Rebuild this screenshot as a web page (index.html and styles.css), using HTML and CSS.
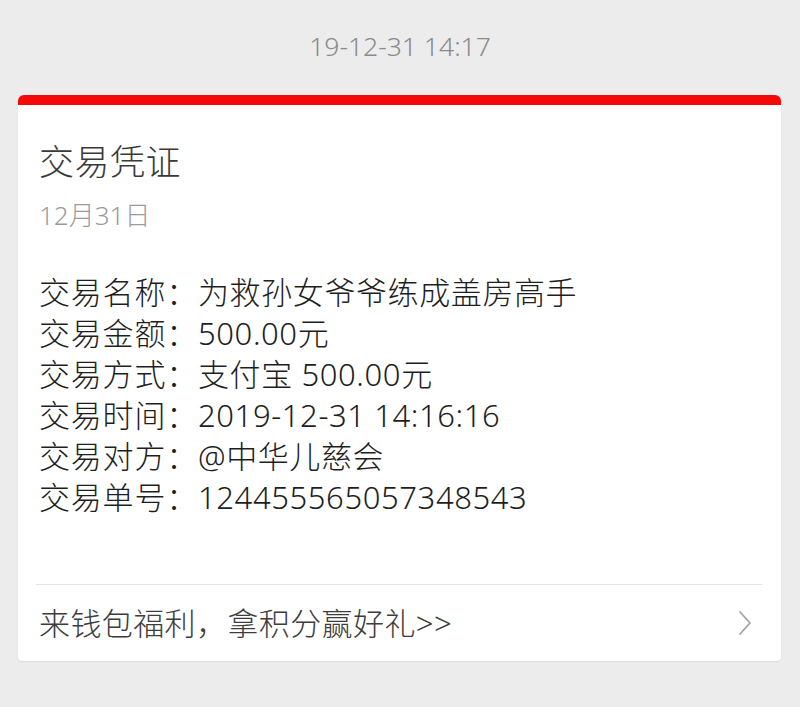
FILE: index.html
```html
<!DOCTYPE html>
<html lang="zh-CN">
<head>
<meta charset="utf-8">
<title>交易凭证</title>
<link rel="stylesheet" href="styles.css">
</head>
<body>
  <div class="time">19-12-31 14:17</div>
  <div class="card">
    <div class="card-body">
      <div class="title">交易凭证</div>
      <div class="date">12月31日</div>
      <div class="rows">
        <div class="row"><span class="label">交易名称：</span><span class="value">为救孙女爷爷练成盖房高手</span></div>
        <div class="row"><span class="label">交易金额：</span><span class="value">500.00元</span></div>
        <div class="row"><span class="label">交易方式：</span><span class="value">支付宝 500.00元</span></div>
        <div class="row"><span class="label">交易时间：</span><span class="value">2019-12-31 14:16:16</span></div>
        <div class="row"><span class="label">交易对方：</span><span class="value">@中华儿慈会</span></div>
        <div class="row"><span class="label">交易单号：</span><span class="value">124455565057348543</span></div>
      </div>
    </div>
    <div class="divider"></div>
    <div class="footer">
      <span class="footer-text">来钱包福利，拿积分赢好礼&gt;&gt;</span>
      <svg class="chevron" width="14" height="24" viewBox="0 0 14 24" aria-hidden="true">
        <path d="M2 1 L12 12 L2 23" fill="none" stroke="#a3a3a3" stroke-width="1.8" stroke-linecap="round" stroke-linejoin="round"/>
      </svg>
    </div>
  </div>
</body>
</html>
```

FILE: styles.css
```css
html, body {
  margin: 0;
  padding: 0;
}

body {
  background: #ececec;
  font-family: "Noto Sans", "Noto Sans CJK SC", sans-serif;
  font-weight: 300;
  width: 800px;
  height: 707px;
  overflow: hidden;
}

.time {
  padding-top: 28px;
  height: 36px;
  line-height: 36px;
  font-size: 26.5px;
  color: #8a8a8a;
  text-align: center;
}

.card {
  margin: 31px 19px 0 18px;
  background: #ffffff;
  border-top: 10px solid #f40808;
  border-radius: 6px 6px 4px 4px;
  box-shadow: 0 1px 2px rgba(0, 0, 0, 0.07);
}

.card-body {
  padding: 35px 21px 0 21px;
}

.title {
  font-size: 35px;
  line-height: 44px;
  height: 44px;
  letter-spacing: 0.5px;
  color: #3a3a3a;
}

.date {
  margin-top: 14px;
  font-size: 26px;
  line-height: 34px;
  color: #9b9b9b;
}

.rows {
  margin-top: 40px;
  display: flex;
  flex-direction: column;
}

.row {
  font-size: 31px;
  line-height: 41px;
  height: 41px;
  color: #1e1e1e;
  white-space: nowrap;
}

.label {
  letter-spacing: 0.8px;
}

.value {
  letter-spacing: 0.6px;
}

.divider {
  margin: 66px 18px 0 18px;
  height: 1px;
  background: #e4e4e4;
}

.footer {
  height: 76px;
  display: flex;
  align-items: center;
  justify-content: space-between;
  padding: 0 29px 0 21px;
}

.footer-text {
  font-size: 31px;
  letter-spacing: 0.4px;
  color: #3d3d3d;
  line-height: 41px;
}

.chevron {
  display: block;
}
```
